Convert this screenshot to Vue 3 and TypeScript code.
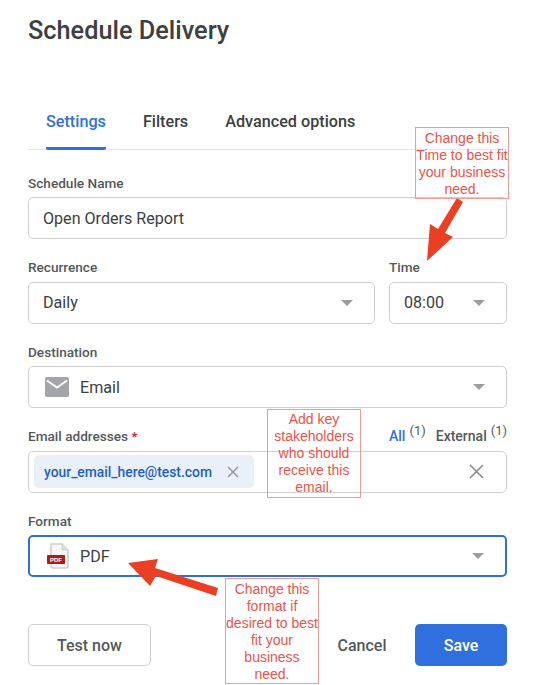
<script setup lang="ts">
const tabs = ['Settings', 'Filters', 'Advanced options']
</script>

<template>
  <div class="page">
    <h1 class="title">Schedule Delivery</h1>

    <nav class="tabs">
      <span v-for="(tab, i) in tabs" :key="tab" class="tab" :class="{ active: i === 0 }">{{ tab }}</span>
    </nav>

    <div class="group">
      <label class="label">Schedule Name</label>
      <div class="field">Open Orders Report</div>
    </div>

    <div class="row">
      <div class="group grow">
        <label class="label">Recurrence</label>
        <div class="field">
          <span class="grow">Daily</span>
          <i class="caret"></i>
        </div>
      </div>
      <div class="group time">
        <label class="label">Time</label>
        <div class="field">
          <span class="grow">08:00</span>
          <i class="caret"></i>
        </div>
      </div>
    </div>

    <div class="group">
      <label class="label">Destination</label>
      <div class="field">
        <svg class="icon" width="24" height="20" viewBox="0 0 24 20">
          <rect width="24" height="20" rx="2" fill="#a3a5a8" />
          <path d="M2 3.5 L12 10.5 L22 3.5" fill="none" stroke="#fff" stroke-width="2" />
        </svg>
        <span class="grow">Email</span>
        <i class="caret"></i>
      </div>
    </div>

    <div class="group">
      <div class="label-row">
        <label class="label">Email addresses <b class="req">*</b></label>
        <div class="filters">
          <span class="all">All</span><sup>(1)</sup>
          <span class="ext">External</span><sup>(1)</sup>
        </div>
      </div>
      <div class="field chips">
        <span class="chip">
          your_email_here@test.com
          <svg width="12" height="12" viewBox="0 0 12 12"><path d="M1 1 L11 11 M11 1 L1 11" stroke="#8f9296" stroke-width="1.4" /></svg>
        </span>
        <span class="grow"></span>
        <svg class="clear" width="15" height="15" viewBox="0 0 15 15"><path d="M1 1 L14 14 M14 1 L1 14" stroke="#85888c" stroke-width="1.5" /></svg>
      </div>
    </div>

    <div class="group">
      <label class="label">Format</label>
      <div class="field focus">
        <svg class="icon pdf" width="23" height="26" viewBox="0 0 23 26">
          <path d="M4 1 H15 L21 7 V23 a2 2 0 0 1 -2 2 H6 a2 2 0 0 1 -2 -2 Z" fill="#f7f7f7" stroke="#cfcfcf" stroke-width="1.6" />
          <path d="M15 1 V7 H21" fill="#e2e2e2" stroke="#cfcfcf" stroke-width="1" />
          <rect x="0" y="12" width="18" height="9" rx="1" fill="#a81d16" />
          <text x="9" y="18.8" class="pdf-text" text-anchor="middle">PDF</text>
        </svg>
        <span class="grow">PDF</span>
        <i class="caret"></i>
      </div>
    </div>

    <footer class="actions">
      <button class="btn outline">Test now</button>
      <span class="grow"></span>
      <button class="btn plain">Cancel</button>
      <button class="btn primary">Save</button>
    </footer>

    <!-- callouts sit over the form -->
    <svg class="arrows" width="537" height="685" viewBox="0 0 537 685">
      <path d="M457 198 L463 202 L445 233 L453 237 L427 261 L430 224 L438 229 Z" fill="#ea3f22" />
      <path d="M218 588 L216 596 L156 576 L150 586 L128 563 L158 559 L155 568 Z" fill="#ea3f22" />
    </svg>
    <div class="note note-time">Change this Time to best fit your business need.</div>
    <div class="note note-email">Add key stakeholders who should receive this email.</div>
    <div class="note note-format">Change this format if desired to best fit your business need.</div>
  </div>
</template>

<style scoped>
.page {
  position: relative;
  width: 537px;
  height: 685px;
  box-sizing: border-box;
  padding: 0 30px 0 28px;
  overflow: hidden;
  background: #fff;
  color: #3c4043;
  font-family: Roboto, sans-serif;
}

.title {
  margin: 0;
  padding-top: 15px;
  height: 31px;
  font-size: 25.3px;
  line-height: 32px;
  font-weight: 500;
  color: #3c4043;
}

.tabs {
  display: flex;
  gap: 37px;
  height: 46px;
  margin-top: 58px;
  padding-left: 18px;
  box-sizing: border-box;
  border-bottom: 1.5px solid #e6e6e6;
}

.tab {
  height: 46px;
  font-size: 16.2px;
  line-height: 36px;
  font-weight: 500;
  color: #3c4043;
  box-sizing: border-box;
}

.tab.active {
  color: #2f6fde;
  border-bottom: 3px solid #2f6fde;
  border-radius: 2px;
}

.group {
  margin-bottom: 19px;
}

.tabs + .group {
  margin-top: 23.5px;
}

.row {
  display: flex;
  gap: 14px;
}

.grow {
  flex: 1;
  min-width: 0;
}

.time {
  width: 118px;
}

.label {
  display: block;
  height: 18px;
  margin-bottom: 5.5px;
  font-size: 13.6px;
  line-height: 18px;
  font-weight: 500;
  color: #55585c;
}

.label-row {
  display: flex;
  justify-content: space-between;
}

.req {
  color: #c5221f;
  font-weight: 500;
}

.filters {
  font-size: 14px;
  line-height: 18px;
  font-weight: 500;
  color: #55585c;
}

.filters sup {
  font-size: 13px;
  font-weight: 400;
  line-height: 0;
  margin-left: 4px;
}

.all {
  color: #2f6fde;
}

.ext {
  margin-left: 10px;
}

.field {
  display: flex;
  align-items: center;
  height: 42px;
  box-sizing: border-box;
  padding: 0 14px;
  border: 1.5px solid #cfcfcf;
  border-radius: 5px;
  font-size: 16.1px;
  color: #3c4043;
  background: #fff;
}

.field.focus {
  border: 2px solid #2f6fde;
}

.icon {
  flex: none;
  margin: 0 11px 0 2px;
}

.pdf {
  margin: 0 10px 0 3px;
}

.pdf-text {
  font-family: "Liberation Sans", sans-serif;
  font-size: 6px;
  font-weight: 700;
  fill: #fff;
}

.caret {
  flex: none;
  width: 0;
  height: 0;
  margin-right: 7px;
  border-left: 6px solid transparent;
  border-right: 6px solid transparent;
  border-top: 6px solid #9b9da0;
}

.chips {
  padding: 0 22px 0 5px;
}

.chip {
  display: flex;
  align-items: center;
  gap: 15px;
  height: 33px;
  padding: 0 15px 0 10px;
  border-radius: 5px;
  background: #e9f0fa;
  color: #1f5fc4;
  font-size: 13.85px;
  font-weight: 500;
}

.actions {
  display: flex;
  align-items: center;
  margin-top: 47px;
}

.btn {
  height: 42px;
  box-sizing: border-box;
  border-radius: 5px;
  font-family: Roboto, sans-serif;
  font-size: 16px;
  font-weight: 500;
}

.outline {
  width: 123px;
  border: 1.5px solid #cfcfcf;
  background: #fff;
  color: #55585c;
}

.plain {
  width: 50px;
  padding: 0;
  margin-right: 28px;
  border: none;
  background: none;
  color: #55585c;
}

.primary {
  width: 92px;
  border: none;
  background: #2f6fde;
  color: #fff;
}

.arrows {
  position: absolute;
  left: 0;
  top: 0;
  pointer-events: none;
}

.note {
  position: absolute;
  box-sizing: border-box;
  width: 94px;
  padding-top: 2px;
  border: 1px solid #f59a92;
  font-family: "Liberation Sans", Arial, sans-serif;
  font-size: 14px;
  line-height: 17px;
  text-align: center;
  color: #f0524a;
}

.note-time {
  left: 415px;
  top: 127px;
  height: 72px;
}

.note-email {
  left: 267px;
  top: 409px;
  height: 89px;
  padding-top: 1px;
}

.note-format {
  left: 225px;
  top: 578px;
  height: 106px;
}
</style>
